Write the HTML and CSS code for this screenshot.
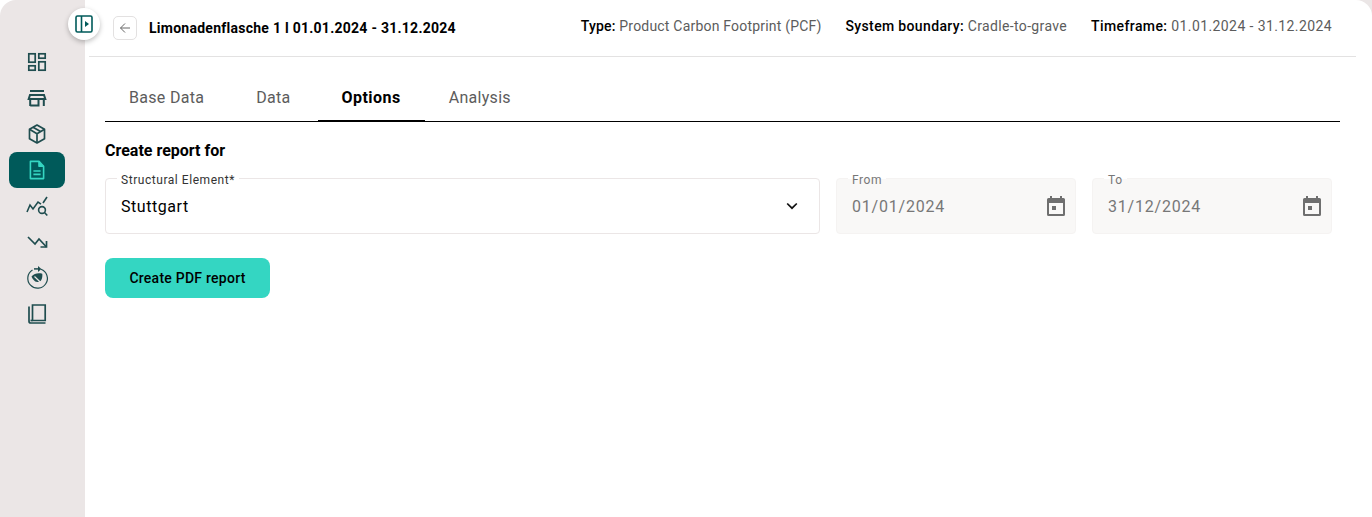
FILE: index.html
```html
<!DOCTYPE html>
<html lang="en">
<head>
<meta charset="utf-8">
<title>Limonadenflasche 1</title>
<link rel="stylesheet" href="styles.css">
</head>
<body>
<div class="app">
  <aside class="sidebar">
    <button class="toggle" aria-label="Toggle sidebar">
      <svg width="18" height="18" viewBox="0 0 18 18"><rect x="1" y="1" width="16" height="16" rx="1.5" fill="none" stroke="#005a5a" stroke-width="1.6"/><path d="M6.5 1v16" stroke="#005a5a" stroke-width="1.6"/><path d="M10 6l4 3-4 3z" fill="#005a5a"/></svg>
    </button>
    <nav class="nav">
      <a class="nav-item"><svg width="20" height="20" viewBox="0 0 20 20" fill="none" stroke="#1f4d4f" stroke-width="1.7"><rect x="1.800" y="1.800" width="6.400" height="8.400"/><rect x="11.800" y="1.800" width="6.400" height="4.400"/><rect x="1.800" y="13.800" width="6.400" height="4.400"/><rect x="11.800" y="9.800" width="6.400" height="8.400"/></svg></a>
      <a class="nav-item"><svg width="20" height="20" viewBox="0 0 20 20" fill="none" stroke="#1f4d4f" stroke-width="2"><path d="M3 3h14"/><path d="M3 7h14l1.300 4H1.700z"/><path d="M3.200 11v7M16.800 11v7M3.200 17.500h8.300V11"/></svg></a>
      <a class="nav-item"><svg width="20" height="20" viewBox="0 0 20 20" fill="none" stroke="#1f4d4f" stroke-width="1.700" stroke-linejoin="round"><path d="M10 1l7.500 4.300v9.400L10 19l-7.500-4.300V5.300z"/><path d="M2.500 5.300L10 9.800l7.500-4.500M10 9.800V19M6 3.200l8 4.600"/></svg></a>
      <a class="nav-item active"><svg width="20" height="20" viewBox="0 0 20 20" fill="none" stroke="#35d6c2" stroke-width="1.600" stroke-linejoin="round"><path d="M3.400 1.400h8.600l4.600 4.800v12.400H3.400z"/><path d="M12 1.400v4.800h4.600" fill="#35d6c2"/><path d="M6.400 11h7.200M6.400 14.400h7.200"/></svg></a>
      <a class="nav-item"><svg width="22" height="22" viewBox="0 0 22 22" fill="none" stroke="#1f4d4f" stroke-width="1.600"><path d="M1 17l3-7 3 4 5-7 3 2.200"/><path d="M17 8l4-6"/><circle cx="16" cy="15" r="3.400"/><path d="M18.500 17.500l2.800 3"/></svg></a>
      <a class="nav-item"><svg width="20" height="20" viewBox="0 0 20 20" fill="none" stroke="#1f4d4f" stroke-width="1.700"><path d="M1 5l7 7 4-5 7.500 8"/><path d="M19.500 9v6H13.500"/></svg></a>
      <a class="nav-item"><svg width="22" height="22" viewBox="0 0 22 22" fill="none" stroke="#1f4d4f" stroke-width="1.200"><path d="M6.500 3A9.800 9.800 0 1 0 15 2.200"/><path d="M8 1.900h4.500" stroke-width="1.500"/><path d="M12 -1l3.400 3-3.400 3z" fill="#1f4d4f" stroke="none"/><path d="M5.500 9.500c3-3.500 7-3.700 10.800-2.800.4 3.800-.6 8.600-5 8.300-3-.2-4.600-3-5.800-5.500z" fill="#1f4d4f" stroke="none"/><path d="M8.500 9.500l7.500 7.300" stroke="#ebe6e6" stroke-width="1.200"/></svg></a>
      <a class="nav-item"><svg width="20" height="20" viewBox="0 0 20 20" fill="none" stroke="#1f4d4f" stroke-width="1.700"><path d="M5.500 1h12.700v15.500H5.500z"/><path d="M2 2.500v14.700c0 1 .8 1.800 1.800 1.800H18.500"/><path d="M5.500 16.500H3.500"/></svg></a>
    </nav>
  </aside>
  <main class="main">
    <header class="topbar">
      <div class="title-group">
        <button class="back" aria-label="Back"><svg width="12" height="12" viewBox="0 0 12 12" fill="none" stroke="#666" stroke-width="1"><path d="M11 6H1.500M6 1.500L1.500 6 6 10.500"/></svg></button>
        <h1 class="title">Limonadenflasche 1 l 01.01.2024 - 31.12.2024</h1>
      </div>
      <div class="meta">
        <span class="meta-item type"><b>Type:</b> Product Carbon Footprint (PCF)</span>
        <span class="meta-item boundary"><b>System boundary:</b> Cradle-to-grave</span>
        <span class="meta-item timeframe"><b>Timeframe:</b> 01.01.2024 - 31.12.2024</span>
      </div>
    </header>
    <section class="content">
      <div class="tabs">
        <a class="tab">Base Data</a>
        <a class="tab">Data</a>
        <a class="tab selected">Options</a>
        <a class="tab">Analysis</a>
      </div>
      <h2 class="section-title">Create report for</h2>
      <div class="fields">
        <div class="field grow">
          <span class="legend">Structural Element*</span>
          <span class="value">Stuttgart</span>
          <svg width="14" height="14" viewBox="0 0 14 14" fill="none" stroke="#111" stroke-width="1.700"><path d="M2.200 4.500L7 9.200l4.800-4.700"/></svg>
        </div>
        <div class="field date">
          <span class="legend">From</span>
          <span class="value">01/01/2024</span>
          <svg width="18" height="20" viewBox="0 0 18 20"><path fill="#6f6f6f" d="M3 0h2v2h8V0h2v2h1.500A1.500 1.500 0 0 1 18 3.500v15a1.500 1.500 0 0 1-1.500 1.500h-15A1.500 1.500 0 0 1 0 18.500v-15A1.500 1.500 0 0 1 1.500 2H3z"/><rect x="2" y="7" width="14" height="11" fill="#f9f8f7"/><rect x="5" y="10" width="4" height="4" fill="#6f6f6f"/></svg>
        </div>
        <div class="field date">
          <span class="legend">To</span>
          <span class="value">31/12/2024</span>
          <svg width="18" height="20" viewBox="0 0 18 20"><path fill="#6f6f6f" d="M3 0h2v2h8V0h2v2h1.500A1.500 1.500 0 0 1 18 3.500v15a1.500 1.500 0 0 1-1.500 1.500h-15A1.500 1.500 0 0 1 0 18.500v-15A1.500 1.500 0 0 1 1.500 2H3z"/><rect x="2" y="7" width="14" height="11" fill="#f9f8f7"/><rect x="5" y="10" width="4" height="4" fill="#6f6f6f"/></svg>
        </div>
      </div>
      <button class="primary">Create PDF report</button>
    </section>
  </main>
</div>
</body>
</html>
```
FILE: styles.css
```css
* { box-sizing: border-box; }
html, body { margin: 0; height: 100%; background: #fff; }
body { font-family: Roboto, "Noto Sans", sans-serif; color: #000; overflow: hidden; }
button { font-family: inherit; cursor: pointer; }
svg { display: block; flex: none; overflow: visible; }

.app { display: flex; height: 517px; background: linear-gradient(90deg, #fff 50%, #ebe6e6 50%); }

.sidebar { position: relative; width: 85px; flex: none; background: #ebe6e6; border-top-left-radius: 16px; padding-top: 44px; }
.toggle { position: absolute; left: 68px; top: 8px; width: 32px; height: 32px; border: 0; border-radius: 50%; background: #fff; display: flex; align-items: center; justify-content: center; box-shadow: 0 2px 5px rgba(0,0,0,.25); padding: 0; z-index: 2; }
.nav { display: flex; flex-direction: column; padding-left: 9px; width: 65px; }
.nav-item { height: 36px; width: 56px; display: flex; align-items: center; justify-content: center; border-radius: 8px; }
.nav-item.active { background: #005a5a; }

.main { flex: 1; min-width: 0; background: #fff; border-top-right-radius: 16px; }

.topbar { height: 57px; margin: 0 16px 0 4px; padding: 0 24px; border-bottom: 1px solid #e3e2e2; display: flex; align-items: center; justify-content: space-between; }
.title-group { display: flex; align-items: center; gap: 12px; }
.back { width: 24px; height: 24px; padding: 0; background: #fff; border: 1px solid #e3e1e1; border-radius: 5px; display: flex; align-items: center; justify-content: center; }
.title { margin: 0; font-size: 14px; font-weight: 700; line-height: 20px; letter-spacing: .26px; white-space: nowrap; }
.meta { display: flex; gap: 24px; margin-bottom: 4px; font-size: 14px; line-height: 20px; color: #5c5c5c; white-space: nowrap; }
.meta b { color: #000; font-weight: 500; }
.type { letter-spacing: .2px; }
.boundary { letter-spacing: .35px; }
.timeframe { letter-spacing: .4px; }

.content { padding: 0 32px 0 20px; }
.tabs { display: flex; gap: 4px; height: 65px; align-items: flex-end; border-bottom: 1px solid #000; }
.tab { height: 48px; padding: 0 24px; display: flex; align-items: center; justify-content: center; font-size: 16px; letter-spacing: .3px; color: #5c5c5c; margin-bottom: -1px; border-bottom: 2px solid transparent; }
.tab.selected { color: #000; font-weight: 700; letter-spacing: .45px; border-bottom-color: #000; margin: 0 -4px -1px -1px; }
.section-title { margin: 18px 0 16px; font-size: 16px; line-height: 22px; font-weight: 700; }

.fields { display: flex; gap: 16px; padding-right: 8px; }
.field { position: relative; height: 56px; border: 1px solid #ebe6e6; border-radius: 4px; display: flex; align-items: center; justify-content: space-between; padding: 0 20px 0 15px; }
.grow { flex: 1; }
.date { width: 240px; flex: none; background: #f9f8f7; border-color: #f5f3f2; padding-right: 10px; color: #777; }
.legend { position: absolute; left: 11px; top: -5px; padding: 0 4px; background: #fff; font-size: 12px; line-height: 12px; letter-spacing: .55px; color: #333; }
.date .legend { background: linear-gradient(#fff 40%, #f9f8f7 40%); color: #777; }
.value { font-size: 16px; letter-spacing: .55px; }
.date .value { letter-spacing: .8px; }

.primary { display: block; margin-top: 24px; width: 165px; height: 40px; border: 0; border-radius: 8px; background: #34d6c2; color: #000; font-size: 14px; font-weight: 500; letter-spacing: .25px; }
```
